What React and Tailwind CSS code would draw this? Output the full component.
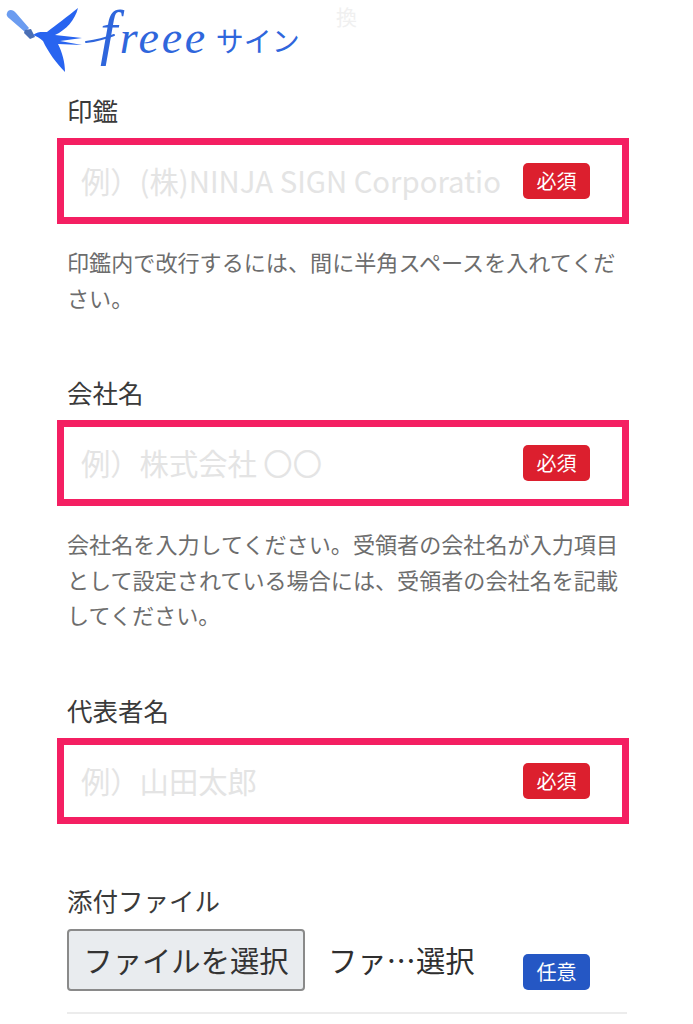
const JP = { fontFamily: '"Noto Sans CJK JP", "Noto Sans", sans-serif' }

function Logo() {
  return (
    <div className="relative flex h-[76px] items-start">
      <svg width="116" height="76" viewBox="0 0 116 76" className="shrink-0">
        {/* pen */}
        <path d="M7 13 C8 9 13 9 16 13 L29 28 L25 32 L10 19 C7 17 6 15 7 13Z" fill="#6b9cf0" />
        <path d="M25 30 L31 29 L35 37 L30 39 L24 33Z" fill="#4a6fb5" />
        {/* swallow */}
        <path d="M33 35 C38 31 43 32 47 32 C56 25 68 16 78 8 C75 20 66 30 55 35 L82 38 L60 41 L82 45 L58 44 C62 52 65 62 65 72 C57 64 48 52 43 41 C40 38 36 36 33 35Z" fill="#2864f0" />
        {/* entry stroke of the f */}
        <path d="M86 42 C94 41 104 39 114 35" fill="none" stroke="#2f66dc" strokeWidth="2" strokeLinecap="round" />
      </svg>
      <div className="mt-[1px] -ml-[16px] flex items-baseline">
        <span
          className="text-[46px] leading-[62px] tracking-[2.6px] text-[#2f66dc] italic"
          style={{ fontFamily: '"Liberation Serif", serif' }}
        >
          <span className="text-[62px] leading-[62px]">f</span>reee
        </span>
        <span className="ml-[8px] -translate-y-[1px] text-[28px] leading-none text-[#2f66dc]" style={JP}>
          サイン
        </span>
      </div>
      <span className="absolute top-[1px] left-[336px] text-[21px] text-[#f0f0f0]" style={JP}>
        換
      </span>
    </div>
  )
}

function Badge({ color, children }) {
  return (
    <span
      className={`flex h-[36px] w-[67px] shrink-0 items-center justify-center rounded-[5px] text-[20px] text-white ${color}`}
      style={JP}
    >
      {children}
    </span>
  )
}

function Field({ label, placeholder, help, className }) {
  return (
    <section className={className}>
      <h2 className="pl-[10px] text-[25.5px] leading-[36px] text-[#3a3a3a]" style={JP}>
        {label}
      </h2>
      <div className="mt-[10px] flex h-[86px] items-center justify-between border-[7px] border-[#f41f62] bg-white pr-[32px] pl-[17px]">
        <input
          type="text"
          placeholder={placeholder}
          className="w-[420px] bg-transparent text-[29.3px] outline-none placeholder:text-[#e4e4e4]"
          style={JP}
        />
        <Badge color="bg-[#dc1f2e]">必須</Badge>
      </div>
      {help && (
        <p className="mt-[20px] pl-[10px] text-[22.1px] leading-[35.6px] text-[#6d6d6d]" style={JP}>
          {help}
        </p>
      )}
    </section>
  )
}

export default function App() {
  return (
    <div className="h-[1024px] w-[693px] overflow-hidden bg-white">
      <Logo />
      <main className="pr-[64px] pl-[57px]">
        <Field
          className="mt-[16px]"
          label="印鑑"
          placeholder="例）(株)NINJA SIGN Corporation"
          help="印鑑内で改行するには、間に半角スペースを入れてください。"
        />
        <Field
          className="mt-[59px]"
          label="会社名"
          placeholder="例）株式会社 〇〇"
          help="会社名を入力してください。受領者の会社名が入力項目として設定されている場合には、受領者の会社名を記載してください。"
        />
        <Field className="mt-[59px]" label="代表者名" placeholder="例）山田太郎" />
        <section className="mt-[58px] pr-[2px] pl-[10px]">
          <h2 className="text-[25.5px] leading-[36px] text-[#3a3a3a]" style={JP}>
            添付ファイル
          </h2>
          <div className="mt-[11px] flex items-center pr-[37px]">
            <button
              type="button"
              className="h-[62px] w-[238px] rounded-[4px] border-2 border-[#8a8a8a] bg-[#e9ecef] text-[29.3px] text-[#333]"
              style={JP}
            >
              ファイルを選択
            </button>
            <span className="ml-[23px] text-[29.3px] text-[#2f2f2f]" style={JP}>
              ファ…選択
            </span>
            <div className="mt-[24px] ml-auto">
              <Badge color="bg-[#2557c4]">任意</Badge>
            </div>
          </div>
          <div className="mt-[21px] h-[2px] bg-[#ececec]" />
        </section>
      </main>
    </div>
  )
}
